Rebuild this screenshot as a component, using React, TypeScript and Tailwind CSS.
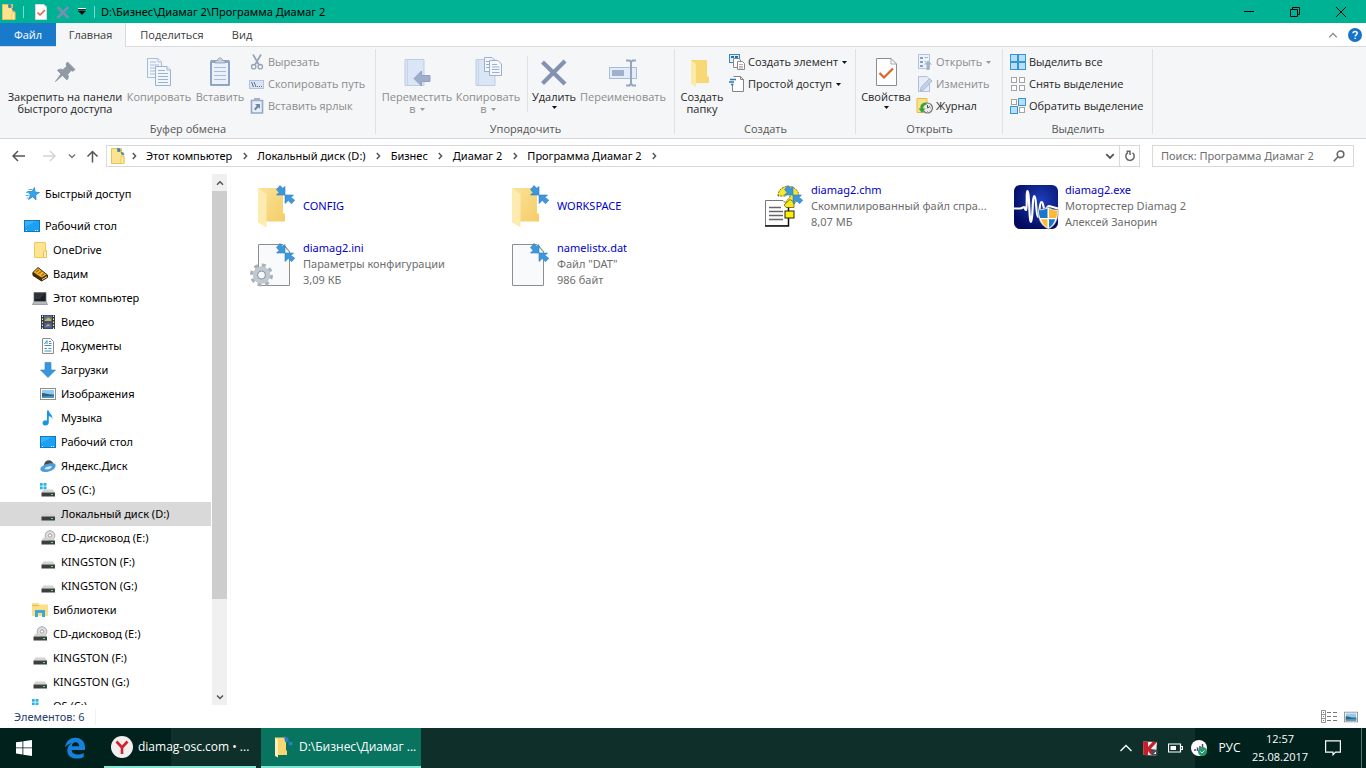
import { ReactNode, useState } from "react";

interface IconProps {
  size?: number;
}

/* ---------- shared glyphs ---------- */

function Caret({ faded = false }: { faded?: boolean }) {
  return (
    <svg width="5" height="3" viewBox="0 0 5 3" className="shrink-0">
      <path d="M0 0H5L2.5 3Z" fill={faded ? "#9a9a9a" : "#111"} />
    </svg>
  );
}

function Chevron({ dir, color = "#555", size = 8, weight = 1.5 }: { dir: "up" | "down" | "right"; color?: string; size?: number; weight?: number }) {
  const paths = { up: "M1 5.8L4 2.8L7 5.8", down: "M1 2.5L4 5.5L7 2.5", right: "M2.8 1L5.6 4L2.8 7" };
  return (
    <svg width={size} height={size} viewBox="0 0 8 8" fill="none" stroke={color} strokeWidth={weight}>
      <path d={paths[dir]} />
    </svg>
  );
}

function SyncFolderIcon({ size = 16 }: IconProps) {
  return (
    <svg width={size} height={size} viewBox="0 0 16 16" className="shrink-0">
      <path d="M1.500 .5H11.500V7.500L14 8V15.500H1.500Z" fill="#fbe38f" stroke="#e8c352" />
      <path d="M11 15.500V9.500L13.800 8V15.500Z" fill="#fff0b5" stroke="#e8c352" strokeWidth=".8" />
      <path d="M6.800 .6L9.500 0L11 3L9.500 4H7.500Z" fill="#4a83ab" />
      <path d="M10.500 4L13.500 4.500L14.500 7L12 6.800Z" fill="#4a83ab" />
    </svg>
  );
}

/* ---------- ribbon icons ---------- */

function PinIcon() {
  return (
    <svg width="32" height="32" viewBox="0 0 32 32">
      <path d="M18.500 6L26 13.500L23.800 15.200L22 14.400L18.600 18.500C19.800 20.400 19.400 22.400 17.900 23.900L13.400 19.400L6.500 25.500L12 18L8.400 14.400C10.200 13 12 12.800 13.800 13.800L17.900 10.200L17.100 8Z" fill="#929ba5" stroke="#929ba5" strokeLinejoin="round" />
      <path d="M18 8.600L23.600 14.200" stroke="#7d8791" strokeWidth=".8" />
    </svg>
  );
}

function CopyIcon() {
  return (
    <svg width="32" height="32" viewBox="0 0 32 32" fill="#f1f6fc" stroke="#a9bbd6">
      <path d="M4.500 2.500H15L18.500 6V21.500H4.500Z" />
      <path d="M15 2.500V6H18.500M7 6H13M7 9H16M7 12H16M7 15H16M7 18H16" />
      <path d="M12.500 10.500H24L27.500 14V29.500H12.500Z" stroke="#9db1d0" />
      <path d="M24 10.500V14H27.500M15 14.500H22M15 17.500H25M15 20.500H25M15 23.500H25M15 26.500H25" stroke="#9db1d0" />
    </svg>
  );
}

function PasteIcon() {
  return (
    <svg width="32" height="32" viewBox="0 0 32 32">
      <rect x="6" y="4" width="20" height="26" rx="1.500" fill="#8ea3c6" />
      <rect x="8" y="7" width="16" height="21" fill="#eaf1fb" />
      <path d="M11 7V4.500H13.500C13.500 1 18.500 1 18.500 4.500H21V7Z" fill="#c6cfdb" stroke="#909caf" strokeWidth=".8" />
      <path d="M10 11.500H22M10 15.500H22M10 19.500H22M10 23.500H22" stroke="#a7bbdb" />
    </svg>
  );
}

function MoveToIcon({ copy = false }: { copy?: boolean }) {
  return (
    <svg width="32" height="32" viewBox="0 0 32 32">
      <path d="M4 3.500H23V29.500H4Z" fill="#dae5f5" stroke="#becde3" />
      <path d="M6.500 3.500V29.500" stroke="#c5d3e8" />
      {copy ? (
        <g fill="#f4f8fd" stroke="#9bb0cf">
          <path d="M12.500 1.500H20L22.500 4V15.500H12.500Z" />
          <path d="M17.500 4.500H26L29.500 8V19.500H17.500Z" />
          <path d="M14 5.500H17M14 8.500H17M14 11.500H17M20 8.500H25M20 11H27.500M20 13.500H27.500M20 16.500H27.500" />
        </g>
      ) : (
        <path d="M13 22.500L20.500 15V19.500H29V25.500H20.500V30Z" fill="#9caecb" stroke="#8fa1be" />
      )}
    </svg>
  );
}

function DeleteIcon() {
  return (
    <svg width="32" height="32" viewBox="0 0 32 32">
      <path d="M4.500 6L27 28M27 5L4.500 27.500" stroke="#8392b0" strokeWidth="4.200" />
    </svg>
  );
}

function RenameIcon() {
  return (
    <svg width="32" height="32" viewBox="0 0 32 32" fill="none">
      <rect x="2.500" y="11.500" width="27" height="11" fill="#e3ecf8" stroke="#a9bcd8" />
      <rect x="5" y="14" width="12" height="6" fill="#a0b1cc" />
      <path d="M19 4.500H22.500L24 6L25.500 4.500H29M24 6V27M19 29.500H22.500L24 27.500L25.500 29.500H29" stroke="#94a5c1" strokeWidth="2" />
    </svg>
  );
}

function BigFolderIcon() {
  return (
    <svg width="32" height="32" viewBox="0 0 32 32">
      <path d="M5 4H21V20L23 21V27H9Z" fill="#f8d775" />
      <path d="M5 4L10 8V31L5 28Z" fill="#fdeaa9" />
    </svg>
  );
}

function PropertiesIcon() {
  return (
    <svg width="32" height="32" viewBox="0 0 32 32" fill="none">
      <path d="M6.500 2.500H21L26.500 8V29.500H6.500Z" fill="#fff" stroke="#8d8d8d" />
      <path d="M21 2.500V8H26.500" stroke="#a5a5a5" />
      <path d="M9.500 17L14 21.500L23 12.500" stroke="#e0622b" strokeWidth="2.200" />
    </svg>
  );
}

function CutIcon() {
  return (
    <svg width="16" height="16" viewBox="0 0 16 16" fill="none" stroke="#96a4b8">
      <path d="M4 .5L9.800 10.500M12 .5L6.200 10.500" strokeWidth="1.700" />
      <circle cx="4.700" cy="12.700" r="2.200" strokeWidth="1.300" />
      <circle cx="11.300" cy="12.700" r="2.200" strokeWidth="1.300" />
    </svg>
  );
}

function CopyPathIcon() {
  return (
    <svg width="16" height="16" viewBox="0 0 16 16">
      <rect x=".5" y="4.500" width="14" height="8" fill="#dbe6f5" stroke="#b3c3dc" />
      <path d="M2.500 6L4.500 11M5 6L7 11" stroke="#5d708f" />
      <path d="M8 10.500H9M10 10.500H11M12 10.500H13" stroke="#5d708f" />
    </svg>
  );
}

function PasteLinkIcon() {
  return (
    <svg width="16" height="16" viewBox="0 0 16 16">
      <path d="M2.500 2.500H13.500V15H2.500Z" fill="#e8f0fb" stroke="#93a6c5" strokeWidth="1.600" />
      <path d="M5 0H11V3H5Z" fill="#a4b0c3" />
      <path d="M6 6H11V11L9.300 9.300L6.500 12.500L5 11L7.800 7.800Z" fill="#6e85a9" />
    </svg>
  );
}

function NewItemIcon() {
  return (
    <svg width="16" height="16" viewBox="0 0 16 16">
      <rect x=".5" y=".5" width="10" height="8" fill="#d9effb" stroke="#3f86b5" />
      <rect x="2" y="2" width="3" height="2" fill="#2d6ca5" />
      <rect x="6" y="2" width="3" height="2" fill="#2d6ca5" />
      <path d="M4.500 4.500H10L11.500 6V13.500H4.500Z" fill="#fff" stroke="#8b8b8b" />
      <path d="M8.500 7.500H13.500L15.500 9.500V15.500H8.500Z" fill="#fff" stroke="#8b8b8b" />
      <path d="M10 10.500H14M10 12.500H14" stroke="#df9aa0" />
      <path d="M10 14H14" stroke="#79add1" />
    </svg>
  );
}

function EasyAccessIcon() {
  return (
    <svg width="16" height="16" viewBox="0 0 16 16">
      <path d="M4.500 .5H11.500L14.500 3.500V15.500H3.500V9" fill="#fff" stroke="#858585" />
      <path d="M11.500 .5V3.500H14.500" fill="none" stroke="#858585" />
      <path d="M1 3.500H7M0 6H5M2 8.500H4.500" stroke="#2f7ab0" strokeWidth="1.300" />
    </svg>
  );
}

function OpenIcon() {
  return (
    <svg width="16" height="16" viewBox="0 0 16 16">
      <rect x="1.500" y=".5" width="11" height="14" fill="#edf3fb" stroke="#b3c3dc" />
      <path d="M3 3H6V5H3ZM3 7H6V9H3ZM3 11H6V13H3Z" fill="#8b9fbd" />
      <path d="M7.500 3.500H11M7.500 7.500H9" stroke="#a3b4cd" />
      <path d="M11 6.500L15 10.500H12.500V16H9.500V10.500H7Z" fill="#a3b4cd" />
    </svg>
  );
}

function EditIcon() {
  return (
    <svg width="16" height="16" viewBox="0 0 16 16">
      <path d="M1.500 .5H10L12.500 3V15.500H1.500Z" fill="#e5edf9" stroke="#b0c0da" />
      <path d="M3.500 15L4 11.500L12.500 2.500L15 5L6.500 14Z" fill="#c3d2e8" stroke="#a7b8d2" />
    </svg>
  );
}

function HistoryIcon() {
  return (
    <svg width="18" height="16" viewBox="0 0 18 16" className="shrink-0">
      <path d="M1 .5H11V14.500H1Z" fill="#fbe287" stroke="#e7bd4a" />
      <circle cx="11.500" cy="10" r="5" fill="#ebebeb" stroke="#777" strokeWidth="1.200" />
      <path d="M11.500 7V10L14 8.500M11.500 13.500V14M15 10H14.500" stroke="#555" fill="none" />
      <path d="M10.500 4.500C6 4.500 3.800 7 4.500 10.500H2.500L6 15L9.500 10.500H7.200C6.800 8.500 8 7 10.500 6.800Z" fill="#3aa53b" />
    </svg>
  );
}

function SelectIcon({ filled }: { filled: boolean[] }) {
  const spots = [[0.5, 0.5], [8.5, 0.5], [0.5, 8.5], [8.5, 8.5]];
  return (
    <svg width="16" height="16" viewBox="0 0 16 16">
      {spots.map(([x, y], i) =>
        filled[i] ? (
          <rect key={i} x={x} y={y} width="7" height="7" fill="#b5e0fb" stroke="#3b93cf" />
        ) : (
          <rect key={i} x={x + 1} y={y + 1} width="5" height="5" fill="#fff" stroke="#a3a3a3" />
        )
      )}
    </svg>
  );
}

/* ---------- tree icons ---------- */

function StarIcon() {
  return (
    <svg width="16" height="16" viewBox="0 0 16 16">
      <path d="M10.500 1.500L11 6L15.500 6.500L11.800 8.800L12 14L8.800 10.800L4.500 13.500L6.500 9L3.500 5.500H8Z" fill="#35a3ec" stroke="#1b7fc4" strokeWidth=".7" />
      <path d="M4.500 3.500H8.500M2 6.500H5.500M1.500 9.500H5.500M2.500 12H4.500" stroke="#56b2ee" />
    </svg>
  );
}

function DesktopIcon() {
  return (
    <svg width="16" height="16" viewBox="0 0 16 16">
      <rect x=".5" y="2.500" width="15" height="11" fill="#1ba1f3" stroke="#0c78c4" />
      <path d="M1 9L12 3H1Z" fill="#39b2fb" />
      <path d="M2 12.500H3M11 12.500H12M13 12.500H14" stroke="#e9f7ff" />
    </svg>
  );
}

function FolderIcon() {
  return (
    <svg width="16" height="16" viewBox="0 0 16 16">
      <path d="M2.500 .5H13.500V15.500H2.500Z" fill="#fce493" stroke="#ecc95f" />
      <path d="M11.500 15.500V9.500L14.500 8.500V15.500Z" fill="#fff0bd" stroke="#e8c352" />
    </svg>
  );
}

function UserIcon() {
  return (
    <svg width="16" height="16" viewBox="0 0 16 16">
      <path d="M.8 6.500L6 1.500L15.500 9V11.500L9.500 15L1 9.500Z" fill="#4a2e05" stroke="#1c1100" strokeWidth=".8" />
      <path d="M1.500 6.300L6 2L14.500 8.800L9.500 11.500Z" fill="#eeb027" />
      <path d="M4 6.200L7 3.800M6.500 7.500L9.500 5.500M9.500 9.500L12 7.800" stroke="#7b4c08" />
      <path d="M10 13.500L15 10.700" stroke="#f7dc8c" />
    </svg>
  );
}

function ComputerIcon() {
  return (
    <svg width="16" height="16" viewBox="0 0 16 16">
      <path d="M2 2.500H14V11.500H2Z" fill="#1d2023" stroke="#6c7177" strokeWidth=".8" />
      <path d="M3 3H13L8 9H3Z" fill="#30343a" />
      <path d="M2 11.500H14L15.500 14.500H.5Z" fill="#b6babe" stroke="#77797b" strokeWidth=".6" />
    </svg>
  );
}

function VideoIcon() {
  return (
    <svg width="16" height="16" viewBox="0 0 16 16">
      <rect x="1" y="1" width="14" height="14" fill="#3a3a3a" />
      <rect x="4" y="1.500" width="8" height="6" fill="#52709f" />
      <rect x="4" y="8.500" width="8" height="6" fill="#3c5fa1" />
      <path d="M5 6L8 3.500L11 5V7H5Z" fill="#d7b332" />
      <path d="M5 13L8 9.500L11 12Z" fill="#d0963a" />
      <path d="M2.500 1.500V15M13.500 1.500V15" stroke="#eee" strokeDasharray="1.500 1.500" />
    </svg>
  );
}

function DocIcon() {
  return (
    <svg width="16" height="16" viewBox="0 0 16 16">
      <path d="M2.500 .5H10.500L13.500 3.500V15.500H2.500Z" fill="#fff" stroke="#8c8c8c" />
      <path d="M9 3.500H11M9 5.500H11.500M4.500 7.500H11.500M4.500 10.500H7M8.500 10.500H11.500M4.500 13H11.500" stroke="#3e93bd" fill="none" />
      <path d="M4.500 6L7 2.500V6" stroke="#3e93bd" fill="none" />
    </svg>
  );
}

function DownloadIcon() {
  return (
    <svg width="16" height="16" viewBox="0 0 16 16">
      <path d="M5 .5H11V8H15.500L8 15.500L.5 8H5Z" fill="#3a96dc" stroke="#2c82c5" strokeWidth=".6" />
    </svg>
  );
}

function PictureIcon({ size = 16 }: IconProps) {
  return (
    <svg width={size} height={size} viewBox="0 0 16 16">
      <rect x=".5" y="2.500" width="15" height="11" fill="#fff" stroke="#8e8e8e" />
      <rect x="2" y="4" width="12" height="8" fill="#8fcbf0" />
      <path d="M2 7C6 7 8 9 14 8.500V12H2Z" fill="#2c6577" />
      <path d="M2 10.500L14 9.800V12H2Z" fill="#4b93c5" />
    </svg>
  );
}

function MusicIcon() {
  return (
    <svg width="16" height="16" viewBox="0 0 16 16">
      <path d="M7 .5H8.800C9 3.500 13 4.500 12.300 9.500C12 7 10.500 6.500 8.800 6.200V12.500C8.800 16.500 2.500 16.500 2.500 13C2.500 10.500 5.500 9.800 7 10.700Z" fill="#1997e5" />
    </svg>
  );
}

function YandexDiskIcon() {
  return (
    <svg width="16" height="16" viewBox="0 0 16 16">
      <path d="M4 7C4.500 1 12 .5 13.500 6L10 8H4Z" fill="#454b51" />
      <path d="M.3 11C.5 7.500 8 5 13 5.300C15.500 5.500 16.300 7 15 9.500C13.500 12.500 8 14.300 4.500 14C2 13.800 .3 12.800 .3 11Z" fill="#4d9edb" />
      <path d="M4.500 11C5.500 8.800 9.500 7.800 12 8.500C11.500 10.800 7.500 12 4.500 11Z" fill="#d7ebf9" />
    </svg>
  );
}

function DriveIcon({ kind }: { kind?: "os" | "cd" }) {
  return (
    <svg width="16" height="16" viewBox="0 0 16 16">
      {kind === "cd" && (
        <g>
          <circle cx="10" cy="5.500" r="4.800" fill="#dedede" stroke="#999" strokeWidth=".8" />
          <circle cx="10" cy="5.500" r="1.700" fill="#fff" stroke="#8a8a8a" strokeWidth=".8" />
        </g>
      )}
      {kind === "os" && <path d="M0 1H2.700V3.700H0ZM3.500 1H6.500V3.700H3.500ZM0 4.500H2.700V7.300H0ZM3.500 4.500H6.500V7.300H3.500Z" fill="#28b3e8" />}
      <path d="M3.500 7.500H13L15 10.500H1.500Z" fill="#d3d3d3" />
      <rect x="1.500" y="10.500" width="13.500" height="4" fill="#3c3f3e" />
      <rect x="11" y="12" width="2" height="1" fill="#4cf06b" />
    </svg>
  );
}

function LibraryIcon() {
  return (
    <svg width="16" height="16" viewBox="0 0 16 16">
      <path d="M0 1H6L7.500 2.500H16V14H0Z" fill="#fbdf88" />
      <path d="M0 3.500H7" stroke="#e5bb4d" />
      <path d="M3 8H13V15H10V11H6V15H3Z" fill="#3aa7d9" />
    </svg>
  );
}

/* ---------- file icons ---------- */

function SyncArrows() {
  return (
    <g fill="#3d97dc" stroke="#2c7fc0" strokeWidth=".6">
      <path d="M31 3.500L33.800 6.300L36 4.500V13H27.500L30 10.400L27.500 7.500Z" />
      <path d="M36 13H44.500L42 15.500L45.800 18.200L42.500 21.800L39.300 18.500L36 21.500Z" />
    </g>
  );
}

function LargeFolderIcon() {
  return (
    <svg width="48" height="48" viewBox="0 0 48 48" className="shrink-0">
      <defs>
        <linearGradient id="folderBack" x1="0" x2="1" y2="1">
          <stop offset="0" stopColor="#fbe29a" />
          <stop offset="1" stopColor="#f4cd66" />
        </linearGradient>
      </defs>
      <path d="M9 6H34V31L36 32V39.500H17Z" fill="url(#folderBack)" />
      <path d="M9 6L17.500 12V45.500L9 40.500Z" fill="#fdebb0" />
      <SyncArrows />
    </svg>
  );
}

function LargePageIcon({ gear = false }: { gear?: boolean }) {
  return (
    <svg width="48" height="48" viewBox="0 0 48 48" className="shrink-0">
      <path d="M9.500 4.500H34L40.500 12V45.500H9.500Z" fill="#f8fafb" stroke="#8e8e8e" />
      <path d="M36 6L41 12" stroke="#999" />
      {gear && (
        <g>
          <circle cx="12.500" cy="35" r="9.800" fill="none" stroke="#a9b2bb" strokeWidth="3.500" strokeDasharray="3.850 3.850" />
          <circle cx="12.500" cy="35" r="6.200" fill="#f7f9fa" stroke="#c0c8d0" strokeWidth="5" />
          <circle cx="12.500" cy="35" r="4" fill="#f7f9fa" stroke="#84919d" />
        </g>
      )}
      <SyncArrows />
    </svg>
  );
}

function ChmIcon() {
  return (
    <svg width="48" height="48" viewBox="0 0 48 48" className="shrink-0">
      <path d="M21 14C21 1 42 1 42 15C42 19 37 20 37 23H28C28 18 33 17 33 14C33 11 29 11 29 14Z" fill="#f7e928" stroke="#4c4710" strokeWidth=".8" strokeDasharray="2 1" />
      <path d="M8.500 18.500H26L31.500 24V43.500H8.500Z" fill="#fff" stroke="#777" />
      <path d="M8 44H31.500V24" fill="none" stroke="#111" strokeWidth="1.500" />
      <path d="M12 25.500H24M12 29.500H26M12 33.500H26M12 37.500H26" stroke="#666" strokeWidth="1.300" />
      <path d="M27 23L33 17.500L37 20V25.500H29Z" fill="#f9e91b" stroke="#4c4710" strokeWidth=".7" />
      <rect x="28" y="29" width="9" height="7" fill="#fff000" stroke="#222" />
      <SyncArrows />
    </svg>
  );
}

function DiamagIcon() {
  return (
    <svg width="48" height="48" viewBox="0 0 48 48" className="shrink-0">
      <defs>
        <radialGradient id="diamagGlow" cx=".6" cy=".35" r=".7">
          <stop offset="0" stopColor="#1d3fb9" />
          <stop offset="1" stopColor="#02095f" />
        </radialGradient>
      </defs>
      <rect x="3" y="3" width="44" height="44" rx="6" fill="url(#diamagGlow)" />
      <path d="M3 26.500H9C12 26.500 12 25 13 25C14.500 25 13.500 28 15 28C16.500 27 15 9 16.500 9C18.500 9 18 40 20 40C22 40 21 14 23.500 14C25.500 14 25 35 27 35C29 35 28 20 30.500 20C32.500 20 32 27 34 27C36 27 36 24 38 24L47 26.500" fill="none" stroke="#fff" strokeWidth="2.200" strokeLinejoin="round" />
      <path d="M27 27C31 28 35 26 37 25C40 27 43 28 47 27.500C48 37 44 44 37.500 47C30 44 26.500 37 27 27Z" fill="#fff" stroke="#8d8d8d" strokeWidth=".7" />
      <path d="M28 28C31 28.500 34 27.500 36.500 26.500V36H29.300C28.200 33.500 27.800 31 28 28ZM38 37.300H44.300C42.800 41.500 40.800 44.200 38 45.700Z" fill="#1b76cd" />
      <path d="M38 26.500C40.500 28 43 28.500 46.300 28.500C46.400 31 46 33.500 45 36H38ZM30 37.300H36.500V45.700C33.500 44 31.500 41.500 30 37.300Z" fill="#fdbb35" />
    </svg>
  );
}

/* ---------- ribbon pieces ---------- */

interface BigButtonProps {
  icon: ReactNode;
  lines: string[];
  width: string;
  disabled?: boolean;
  caret?: boolean;
}

function BigButton({ icon, lines, width, disabled, caret }: BigButtonProps) {
  const tone = disabled ? "text-[#8c8c8c]" : "text-[#262626]";
  return (
    <button type="button" disabled={disabled} className={`flex shrink-0 flex-col items-center self-start whitespace-nowrap pt-1.5 ${width} ${tone}`}>
      {icon}
      <span className="mt-[3px] leading-3">
        {lines.map((line, i) => (
          <span key={line} className="flex items-center justify-center gap-1">
            {line}
            {caret && i > 0 && i === lines.length - 1 && <Caret faded={disabled} />}
          </span>
        ))}
      </span>
      {caret && lines.length === 1 && (
        <span className="mt-[3px]">
          <Caret faded={disabled} />
        </span>
      )}
    </button>
  );
}

interface SmallButtonProps {
  icon: ReactNode;
  label: string;
  disabled?: boolean;
  caret?: boolean;
}

function SmallButton({ icon, label, disabled, caret }: SmallButtonProps) {
  return (
    <button
      type="button"
      disabled={disabled}
      className={`flex h-[22px] items-center whitespace-nowrap ${disabled ? "text-[#8c8c8c]" : "text-[#262626]"}`}
    >
      <span className="mr-[3px] flex w-4 shrink-0 justify-center">{icon}</span>
      {label}
      {caret && (
        <span className="ml-1 flex">
          <Caret faded={disabled} />
        </span>
      )}
    </button>
  );
}

function RibbonGroup({ title, width, children }: { title: string; width: string; children: ReactNode }) {
  return (
    <section className={`relative flex shrink-0 flex-col ${width}`}>
      <div className="flex flex-1 pt-[3px]">{children}</div>
      <h2 className="pb-px text-center leading-4 text-[#555]">{title}</h2>
      <span className="absolute bottom-1 right-0 top-0.5 w-px bg-[#dfe1e3]" />
    </section>
  );
}

/* ---------- data ---------- */

const crumbs = ["Этот компьютер", "Локальный диск (D:)", "Бизнес", "Диамаг 2", "Программа Диамаг 2"];

const indents = ["pl-6", "pl-8", "pl-10"];

const tree = [
  { label: "Рабочий стол", level: 0, icon: <DesktopIcon /> },
  { label: "OneDrive", level: 1, icon: <FolderIcon /> },
  { label: "Вадим", level: 1, icon: <UserIcon /> },
  { label: "Этот компьютер", level: 1, icon: <ComputerIcon /> },
  { label: "Видео", level: 2, icon: <VideoIcon /> },
  { label: "Документы", level: 2, icon: <DocIcon /> },
  { label: "Загрузки", level: 2, icon: <DownloadIcon /> },
  { label: "Изображения", level: 2, icon: <PictureIcon /> },
  { label: "Музыка", level: 2, icon: <MusicIcon /> },
  { label: "Рабочий стол", level: 2, icon: <DesktopIcon /> },
  { label: "Яндекс.Диск", level: 2, icon: <YandexDiskIcon /> },
  { label: "OS (C:)", level: 2, icon: <DriveIcon kind="os" /> },
  { label: "Локальный диск (D:)", level: 2, icon: <DriveIcon /> },
  { label: "CD-дисковод (E:)", level: 2, icon: <DriveIcon kind="cd" /> },
  { label: "KINGSTON (F:)", level: 2, icon: <DriveIcon /> },
  { label: "KINGSTON (G:)", level: 2, icon: <DriveIcon /> },
  { label: "Библиотеки", level: 1, icon: <LibraryIcon /> },
  { label: "CD-дисковод (E:)", level: 1, icon: <DriveIcon kind="cd" /> },
  { label: "KINGSTON (F:)", level: 1, icon: <DriveIcon /> },
  { label: "KINGSTON (G:)", level: 1, icon: <DriveIcon /> },
  { label: "OS (C:)", level: 1, icon: <DriveIcon kind="os" /> },
];

const files = [
  { name: "CONFIG", details: [], icon: <LargeFolderIcon /> },
  { name: "WORKSPACE", details: [], icon: <LargeFolderIcon /> },
  { name: "diamag2.chm", details: ["Скомпилированный файл спра...", "8,07 МБ"], icon: <ChmIcon /> },
  { name: "diamag2.exe", details: ["Мотортестер Diamag 2", "Алексей Занорин"], icon: <DiamagIcon /> },
  { name: "diamag2.ini", details: ["Параметры конфигурации", "3,09 КБ"], icon: <LargePageIcon gear /> },
  { name: "namelistx.dat", details: ["Файл \"DAT\"", "986 байт"], icon: <LargePageIcon /> },
];

/* ---------- window parts ---------- */

function TitleBar() {
  return (
    <header className="flex h-[23px] shrink-0 items-center bg-[#00b294] pr-0.5 text-black">
      <div className="flex items-center pl-px">
        <SyncFolderIcon />
        <span className="ml-1.5 h-3 w-px bg-[#7fd9ca]" />
        <button type="button" aria-label="Свойства" className="ml-2.5">
          <svg width="14" height="16" viewBox="0 0 14 16">
            <path d="M1.500 .5H10L12.500 3V15.500H1.500Z" fill="#fff" stroke="#d8d8d8" />
            <path d="M3.500 8.500L6 11L11 6" fill="none" stroke="#e45c37" strokeWidth="1.500" />
          </svg>
        </button>
        <button type="button" aria-label="Удалить" className="ml-2">
          <svg width="14" height="14" viewBox="0 0 14 14" stroke="#7590b5" strokeWidth="2.500">
            <path d="M1.500 2L12.500 13M12.500 2L1.500 13" />
          </svg>
        </button>
        <button type="button" aria-label="Настройка панели" className="ml-2">
          <svg width="8" height="7" viewBox="0 0 8 7">
            <path d="M0 .5H8" stroke="#fff" />
            <path d="M0 1.500H8M.5 3H7.500L4 6.500Z" stroke="#111" strokeWidth=".8" />
          </svg>
        </button>
        <span className="ml-2 h-3 w-px bg-[#7fd9ca]" />
      </div>
      <h1 className="ml-1.5 flex-1">D:\Бизнес\Диамаг 2\Программа Диамаг 2</h1>
      <button type="button" aria-label="Свернуть" className="flex h-full w-[46px] items-center justify-center">
        <svg width="10" height="10" viewBox="0 0 10 10"><path d="M0 4.500H10" stroke="#000" /></svg>
      </button>
      <button type="button" aria-label="Восстановить" className="flex h-full w-[46px] items-center justify-center">
        <svg width="10" height="10" viewBox="0 0 10 10" fill="none" stroke="#000">
          <path d="M.5 2.500H7.500V9.500H.5ZM2.500 2.500V.5H9.500V7.500H7.500" />
        </svg>
      </button>
      <button type="button" aria-label="Закрыть" className="flex h-full w-[46px] items-center justify-center">
        <svg width="10" height="10" viewBox="0 0 10 10"><path d="M0 0L10 10M10 0L0 10" stroke="#000" /></svg>
      </button>
    </header>
  );
}

function TabBar() {
  return (
    <nav className="flex h-6 shrink-0 items-stretch bg-white font-['Open_Sans',sans-serif] text-[#3b3b3b] shadow-[inset_0_-1px_0_#dadbdc]">
      <button type="button" className="mb-px w-14 bg-[#1979ca] text-white">Файл</button>
      <button type="button" className="w-[70px] border-r border-[#dadbdc] bg-[#f5f6f7]">Главная</button>
      <button type="button" className="w-[92px]">Поделиться</button>
      <button type="button" className="w-12">Вид</button>
      <button type="button" aria-label="Свернуть ленту" className="ml-auto">
        <Chevron dir="up" color="#8c8c8c" size={10} weight={1} />
      </button>
      <button type="button" aria-label="Справка" className="ml-2.5 mr-1 self-center">
        <svg width="14" height="14" viewBox="0 0 14 14">
          <circle cx="7" cy="7" r="7" fill="#1673c8" />
          <path d="M5 5.200C5 3 9.200 3 9.200 5.300C9.200 6.800 7.200 6.900 7.200 8.500M7.200 9.700V11" fill="none" stroke="#fff" strokeWidth="1.500" />
        </svg>
      </button>
    </nav>
  );
}

function Ribbon() {
  return (
    <div className="flex h-[92px] shrink-0 overflow-hidden border-b border-[#d5d6d7] bg-[#f5f6f7] font-['Open_Sans',sans-serif]">
      <RibbonGroup title="Буфер обмена" width="w-[376px]">
        <div className="flex pl-1.5">
          <BigButton width="w-[118px]" icon={<PinIcon />} lines={["Закрепить на панели", "быстрого доступа"]} />
          <BigButton width="w-[70px]" icon={<CopyIcon />} lines={["Копировать"]} disabled />
          <BigButton width="w-[52px]" icon={<PasteIcon />} lines={["Вставить"]} disabled />
          <div className="ml-[3px] pt-px">
            <SmallButton icon={<CutIcon />} label="Вырезать" disabled />
            <SmallButton icon={<CopyPathIcon />} label="Скопировать путь" disabled />
            <SmallButton icon={<PasteLinkIcon />} label="Вставить ярлык" disabled />
          </div>
        </div>
      </RibbonGroup>
      <RibbonGroup title="Упорядочить" width="w-[299px]">
        <div className="flex pl-1">
          <BigButton width="w-[74px]" icon={<MoveToIcon />} lines={["Переместить", "в"]} disabled caret />
          <BigButton width="w-[68px]" icon={<MoveToIcon copy />} lines={["Копировать", "в"]} disabled caret />
          <span className="ml-[5px] mr-0.5 mt-1.5 h-14 w-px bg-[#dfe1e3]" />
          <BigButton width="w-12" icon={<DeleteIcon />} lines={["Удалить"]} caret />
          <BigButton width="w-[90px]" icon={<RenameIcon />} lines={["Переименовать"]} disabled />
        </div>
      </RibbonGroup>
      <RibbonGroup title="Создать" width="w-[181px]">
        <div className="flex pl-1">
          <BigButton width="w-[46px]" icon={<BigFolderIcon />} lines={["Создать", "папку"]} />
          <div className="ml-1 pt-px">
            <SmallButton icon={<NewItemIcon />} label="Создать элемент" caret />
            <SmallButton icon={<EasyAccessIcon />} label="Простой доступ" caret />
          </div>
        </div>
      </RibbonGroup>
      <RibbonGroup title="Открыть" width="w-[147px]">
        <div className="flex pl-1">
          <BigButton width="w-[52px]" icon={<PropertiesIcon />} lines={["Свойства"]} caret />
          <div className="ml-[5px] pt-px">
            <SmallButton icon={<OpenIcon />} label="Открыть" disabled caret />
            <SmallButton icon={<EditIcon />} label="Изменить" disabled />
            <SmallButton icon={<HistoryIcon />} label="Журнал" />
          </div>
        </div>
      </RibbonGroup>
      <RibbonGroup title="Выделить" width="w-[150px]">
        <div className="pl-[7px] pt-px">
          <SmallButton icon={<SelectIcon filled={[true, true, true, true]} />} label="Выделить все" />
          <SmallButton icon={<SelectIcon filled={[false, false, false, false]} />} label="Снять выделение" />
          <SmallButton icon={<SelectIcon filled={[false, true, true, false]} />} label="Обратить выделение" />
        </div>
      </RibbonGroup>
    </div>
  );
}

function AddressBar() {
  const [query, setQuery] = useState("");

  return (
    <div className="flex h-[35px] shrink-0 items-center pb-px pr-3">
      <button type="button" aria-label="Назад" className="ml-3">
        <svg width="14" height="12" viewBox="0 0 14 12" fill="none" stroke="#555" strokeWidth="1.500"><path d="M1 6H13M6 1L1 6L6 11" /></svg>
      </button>
      <button type="button" aria-label="Вперед" disabled className="ml-4">
        <svg width="14" height="12" viewBox="0 0 14 12" fill="none" stroke="#d4d4d4" strokeWidth="1.500"><path d="M1 6H13M8 1L13 6L8 11" /></svg>
      </button>
      <button type="button" aria-label="Последние расположения" className="ml-3">
        <Chevron dir="down" color="#777" />
      </button>
      <button type="button" aria-label="Вверх" className="ml-2.5">
        <svg width="13" height="13" viewBox="0 0 13 13" fill="none" stroke="#555" strokeWidth="1.500"><path d="M6.500 12.500V1.500M1.500 6.500L6.500 1.500L11.500 6.500" /></svg>
      </button>
      <div className="ml-[7px] flex h-[22px] min-w-0 flex-1 items-center border border-[#d9d9d9] pl-[3px]">
        <SyncFolderIcon />
        <ol className="flex min-w-0 flex-1 items-center overflow-hidden whitespace-nowrap">
          <li className="flex w-5 justify-center pr-1"><Chevron dir="right" /></li>
          {crumbs.map((crumb) => (
            <li key={crumb} className="flex items-center">
              <button type="button">{crumb}</button>
              <span className="flex w-[25px] justify-center"><Chevron dir="right" /></span>
            </li>
          ))}
        </ol>
        <button type="button" aria-label="Предыдущие расположения" className="mr-1">
          <Chevron dir="down" size={10} />
        </button>
        <button type="button" aria-label="Обновить" className="flex h-full w-5 items-center justify-center border-l border-[#d9d9d9]">
          <svg width="12" height="12" viewBox="0 0 12 12" fill="none" stroke="#666" strokeWidth="1.500">
            <path d="M8.500 2.800A4.200 4.200 0 1 1 4 2.500M2.500 1.200H6V5" />
          </svg>
        </button>
      </div>
      <label className="ml-3 flex h-[22px] w-[202px] shrink-0 items-center border border-[#d9d9d9] px-2">
        <input
          value={query}
          onChange={(event) => setQuery(event.target.value)}
          aria-label="Поиск"
          placeholder="Поиск: Программа Диамаг 2"
          className="min-w-0 flex-1 outline-none placeholder:text-[#6d6d6d]"
        />
        <svg width="12" height="12" viewBox="0 0 12 12" fill="none" stroke="#666" strokeWidth="1.600">
          <circle cx="7.500" cy="4.300" r="3.300" />
          <path d="M5 6.800L.8 11.200" />
        </svg>
      </label>
    </div>
  );
}

function NavTree() {
  const [selected, setSelected] = useState(12);

  return (
    <aside className="flex w-[231px] shrink-0 border-r border-[#f9f9f9]">
      <div className="min-w-0 flex-1 overflow-hidden pt-2">
        <button type="button" className="flex h-6 w-full items-center gap-[5px] pl-6">
          <StarIcon />
          Быстрый доступ
        </button>
        <ul className="mt-2">
          {tree.map((item, i) => (
            <li key={i}>
              <button
                type="button"
                onClick={() => setSelected(i)}
                className={`flex h-6 w-full items-center gap-[5px] whitespace-nowrap ${indents[item.level]} ${i === selected ? "bg-[#d9d9d9]" : ""}`}
              >
                {item.icon}
                {item.label}
              </button>
            </li>
          ))}
        </ul>
      </div>
      <div className="ml-px mr-[3px] flex w-[15px] flex-col bg-[#f0f0f0]">
        <button type="button" aria-label="Прокрутить вверх" className="flex h-[17px] items-center justify-center">
          <Chevron dir="up" />
        </button>
        <div className="flex-1">
          <div className="h-[82%] bg-[#cdcdcd]" />
        </div>
        <button type="button" aria-label="Прокрутить вниз" className="flex h-[17px] items-center justify-center">
          <Chevron dir="down" />
        </button>
      </div>
    </aside>
  );
}

function FileList() {
  return (
    <main className="min-w-0 flex-1 overflow-hidden pl-[18px] pt-[3px]">
      <ul className="grid grid-cols-[repeat(auto-fill,254px)]">
        {files.map((file) => (
          <li key={file.name}>
            <button type="button" className="flex h-[58px] w-full items-center gap-1.5 pr-2 text-left leading-4">
              {file.icon}
              <span className="min-w-0">
                <span className="block text-[#0000c8]">{file.name}</span>
                {file.details.map((line) => (
                  <span key={line} className="block truncate text-[#6d6d6d]">{line}</span>
                ))}
              </span>
            </button>
          </li>
        ))}
      </ul>
    </main>
  );
}

function StatusBar() {
  return (
    <footer className="flex h-[23px] shrink-0 items-center pl-3.5 pr-2 text-[#26406b]">
      <span className="border-r border-[#f2f2f2] pr-2.5">Элементов: 6</span>
      <button type="button" aria-label="Таблица" className="ml-auto">
        <svg width="16" height="13" viewBox="0 0 16 13" fill="none" stroke="#777">
          <path d="M.5 .5H4.500V12.500H.5ZM.5 4.500H4.500M.5 8.500H4.500" strokeWidth=".8" />
          <path d="M2 2.500H3M2 6.500H3M2 10.500H3M6 2.500H10M12 2.500H16M6 6.500H10M12 6.500H16M6 10.500H10M12 10.500H16" />
        </svg>
      </button>
      <button type="button" aria-label="Крупные значки" className="ml-[7px]">
        <PictureIcon size={14} />
      </button>
    </footer>
  );
}

function Taskbar() {
  return (
    <div className="flex h-10 shrink-0 items-stretch bg-[#0f302a] text-white">
      <div className="flex items-stretch bg-[#00211c]">
        <button type="button" aria-label="Пуск" className="flex w-12 items-center justify-center">
          <svg width="16" height="16" viewBox="0 0 16 16" fill="#fff">
            <path d="M0 2.300L6.500 1.400V7.500H0ZM7.300 1.300L16 0V7.500H7.300ZM0 8.300H6.500V14.500L0 13.600ZM7.300 8.300H16V16L7.300 14.700Z" />
          </svg>
        </button>
        <button type="button" aria-label="Edge" className="flex w-14 items-center pl-4">
          <svg width="22" height="22" viewBox="0 0 22 22" fill="#1583de">
            <path d="M1 10.500C2 4 6 .7 11.500 .7C17.500 .7 21 5 21 10.300V13H7.600C7.800 16 10.300 17.500 13.600 17.500C16 17.500 18 16.900 19.700 15.900V20C17.700 21.100 15.300 21.600 12.700 21.600C7 21.600 3.300 18.500 3.300 13.500C3.300 10.200 5 7.700 8 6.200C5 6.600 2.700 8 1 10.500ZM7.800 9.300H15.300C15.300 7 14 5.300 11.700 5.300C9.500 5.300 8.100 6.900 7.800 9.300Z" />
          </svg>
        </button>
      </div>
      <button
        type="button"
        className="flex w-[152px] items-center whitespace-nowrap border-b-2 border-[#83e5d2] bg-[linear-gradient(90deg,#00211c_67px,#0f302a_67px)] pl-[7px] font-['Open_Sans',sans-serif] text-[12px]"
      >
        <svg width="22" height="22" viewBox="0 0 22 22">
          <circle cx="11" cy="11" r="11" fill="#f0f0f0" />
          <path d="M5.500 5.500L11 11.500L16.500 5.500M11 11V18" fill="none" stroke="#d3202a" strokeWidth="2.600" />
        </svg>
        <span className="ml-[5px]">diamag-osc.com • ...</span>
      </button>
      <button type="button" className="ml-[5px] flex w-40 items-center whitespace-nowrap border-b-2 border-[#83e5d2] bg-[#08735f] pl-3 font-['Open_Sans',sans-serif] text-[12px]">
        <svg width="20" height="22" viewBox="0 0 20 22">
          <path d="M2 1.500H13V14L14 15V19H4Z" fill="#f8d671" />
          <path d="M2 1.500L5 3.500V21.500L2 20Z" fill="#fff0b9" />
          <path d="M11 0L15.500 2V6H12ZM15.500 6H19.500V9L16 9.500Z" fill="#2f7dc0" />
        </svg>
        <span className="ml-1.5">D:\Бизнес\Диамаг ...</span>
      </button>

      <div className="ml-auto flex items-center">
        <button type="button" aria-label="Скрытые значки" className="mr-[11px]">
          <svg width="12" height="8" viewBox="0 0 12 8" fill="none" stroke="#fff" strokeWidth="1.300"><path d="M.5 7L6 1.500L11.500 7" /></svg>
        </button>
        <svg width="15" height="15" viewBox="0 0 15 15" className="mr-2.5">
          <path d="M0 .5L14 1L13 14.500L.5 14Z" fill="#ededed" />
          <path d="M0 .5H5V6L9.500 1H14L8 7.500L11.500 12L8 14L5 10V14H.5Z" fill="#c51f2c" />
          <path d="M8 8L14.500 9V14.500H9Z" fill="#4a4a4a" />
          <path d="M10.500 13L13 10.500V13Z" fill="#fff" />
        </svg>
        <svg width="15" height="10" viewBox="0 0 15 10" className="mr-2">
          <path d="M.5 1H12.500V9H.5ZM12.500 3.500H14.500V6.500H12.500" fill="none" stroke="#fff" strokeWidth="1.200" />
          <rect x="2.500" y="3" width="5.500" height="4" fill="#fff" />
        </svg>
      </div>
      <div className="flex items-center bg-[linear-gradient(90deg,#0f302a_4px,#00211c_4px)]">
        <svg width="16" height="16" viewBox="0 0 16 16" className="mr-[11px]">
          <circle cx="8" cy="8" r="8" fill="#fff" />
          <path d="M4 11V9M6.500 11V7.500M9 11V6M11.500 10V4" stroke="#5c3c86" strokeWidth="1.500" />
          <circle cx="11.500" cy="11.500" r="4.500" fill="#239a6b" />
          <path d="M9.500 11.500L11 13L13.500 10.500" fill="none" stroke="#fff" />
        </svg>
        <span className="w-[23px] text-center font-['Open_Sans',sans-serif] text-[12px]">РУС</span>
        <time className="ml-[11px] w-[56px] text-center font-['Open_Sans',sans-serif] leading-[18px]">
          12:57
          <br />
          25.08.2017
        </time>
        <button type="button" aria-label="Уведомления" className="ml-[17px] mr-5">
          <svg width="16" height="16" viewBox="0 0 16 16" fill="none" stroke="#fff" strokeWidth="1.200">
            <path d="M.6 .8H15.400V12.200H10.500L8 14.800V12.200H.6Z" />
          </svg>
        </button>
        <span className="mr-1 h-full w-px bg-[#5d736f]" />
      </div>
    </div>
  );
}

export default function App() {
  return (
    <div className="flex h-screen flex-col overflow-hidden bg-white font-['Noto_Sans',sans-serif] text-[11px] leading-4 text-black">
      <TitleBar />
      <TabBar />
      <Ribbon />
      <AddressBar />
      <div className="flex min-h-0 flex-1">
        <NavTree />
        <FileList />
      </div>
      <StatusBar />
      <Taskbar />
    </div>
  );
}
